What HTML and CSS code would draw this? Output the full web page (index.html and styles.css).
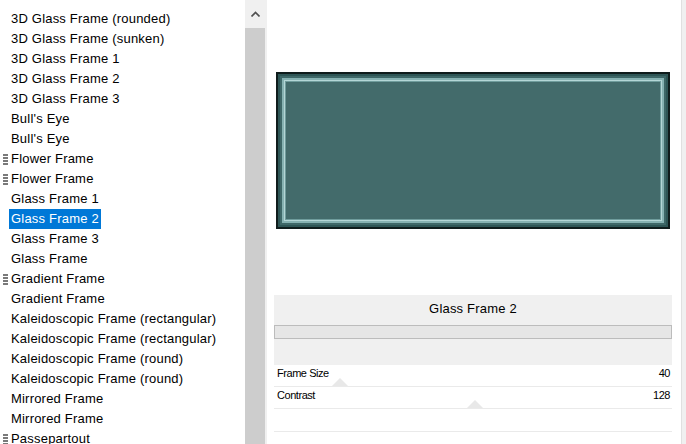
FILE: index.html
```html
<!DOCTYPE html>
<html>
<head>
<meta charset="utf-8">
<link rel="stylesheet" href="styles.css">
</head>
<body>
<div class="app">
  <div class="listpane">
    <ul class="list">
      <li><span class="lbl">3D Glass Frame (rounded)</span></li>
      <li><span class="lbl">3D Glass Frame (sunken)</span></li>
      <li><span class="lbl">3D Glass Frame 1</span></li>
      <li><span class="lbl">3D Glass Frame 2</span></li>
      <li><span class="lbl">3D Glass Frame 3</span></li>
      <li><span class="lbl">Bull's Eye</span></li>
      <li><span class="lbl">Bull's Eye</span></li>
      <li class="grip"><span class="lbl">Flower Frame</span></li>
      <li class="grip"><span class="lbl">Flower Frame</span></li>
      <li><span class="lbl">Glass Frame 1</span></li>
      <li class="sel"><span class="lbl">Glass Frame 2</span></li>
      <li><span class="lbl">Glass Frame 3</span></li>
      <li><span class="lbl">Glass Frame</span></li>
      <li class="grip"><span class="lbl">Gradient Frame</span></li>
      <li><span class="lbl">Gradient Frame</span></li>
      <li><span class="lbl">Kaleidoscopic Frame (rectangular)</span></li>
      <li><span class="lbl">Kaleidoscopic Frame (rectangular)</span></li>
      <li><span class="lbl">Kaleidoscopic Frame (round)</span></li>
      <li><span class="lbl">Kaleidoscopic Frame (round)</span></li>
      <li><span class="lbl">Mirrored Frame</span></li>
      <li><span class="lbl">Mirrored Frame</span></li>
      <li class="grip"><span class="lbl">Passepartout</span></li>
    </ul>
    <div class="scrollbar">
      <div class="sb-up">
        <svg width="9" height="6" viewBox="0 0 9 6"><path d="M0.5 5.5 L4.5 1.5 L8.5 5.5" fill="none" stroke="#505050" stroke-width="1.6"/></svg>
      </div>
      <div class="sb-thumb"></div>
    </div>
  </div>
  <div class="divider"></div>
  <div class="main">
    <div class="preview">
      <div class="frame"><div class="f2"><div class="f3"><div class="f4"><div class="f5"><div class="fill"></div></div></div></div></div></div>
    </div>
    <div class="props">
      <div class="title">Glass Frame 2</div>
      <div class="progress"></div>
      <div class="ticks"></div>
      <div class="row">
        <span class="name">Frame Size</span><span class="val">40</span>
        <span class="thumb" style="left: 58px"></span>
      </div>
      <div class="row">
        <span class="name">Contrast</span><span class="val">128</span>
        <span class="thumb" style="left: 193px"></span>
      </div>
      <div class="row empty"></div>
    </div>
  </div>
  <div class="rightstrip"></div>
</div>
</body>
</html>
```

FILE: styles.css
```css
html, body {
  margin: 0;
  padding: 0;
  background: #ffffff;
  width: 686px;
  height: 444px;
  overflow: hidden;
}
body {
  font-family: "Liberation Sans", Arial, sans-serif;
  font-size: 13px;
  color: #000;
}
.app {
  display: flex;
  width: 686px;
  height: 444px;
}
.listpane {
  display: flex;
  width: 265px;
  flex: none;
}
.list {
  list-style: none;
  margin: 0;
  padding: 9px 0 0 0;
  width: 245px;
  flex: none;
}
.list li {
  height: 20px;
  line-height: 20px;
  padding-left: 9px;
  position: relative;
  white-space: nowrap;
}
.lbl {
  display: inline-block;
  padding: 0 2px;
  line-height: 20px;
  letter-spacing: 0.2px;
}
.sel .lbl {
  background: #0078d7;
  color: #fff;
}
.grip::before {
  content: "";
  position: absolute;
  left: 3px;
  top: 5px;
  width: 5px;
  height: 11px;
  background: repeating-linear-gradient(to bottom, #7a7a7a 0 2px, transparent 2px 3px);
}
.scrollbar {
  width: 20px;
  flex: none;
  display: flex;
  flex-direction: column;
  background: #cdcdcd;
}
.sb-up {
  height: 28px;
  background: #f0f0f0;
  display: flex;
  align-items: center;
  justify-content: center;
}
.sb-thumb {
  flex: 1;
  background: #cdcdcd;
}
.divider {
  width: 5px;
  flex: none;
  border-left: 2px solid #f0f0f0;
  box-sizing: border-box;
}
.main {
  width: 409px;
  flex: none;
  padding-left: 4px;
  box-sizing: border-box;
}
.preview {
  height: 295px;
  padding-top: 72px;
  padding-left: 2px;
  box-sizing: border-box;
}
.frame {
  width: 394px;
  height: 157px;
  box-sizing: border-box;
  border: 2px solid #0f1c1c;
  background: #2e5656;
  padding: 2px;
}
.f2 { height: 100%; box-sizing: border-box; border: 2px solid #3e6868; }
.f3 { height: 100%; box-sizing: border-box; border: 2px solid #86b2b2; }
.f4 { height: 100%; box-sizing: border-box; border: 1px solid #b4d6d6; }
.f5 { height: 100%; box-sizing: border-box; border: 1px solid #6f9c9c; }
.fill { height: 100%; background: #436b6b; }
.props {
  width: 398px;
}
.title {
  background: #f0f0f0;
  height: 30px;
  line-height: 28px;
  text-align: center;
  font-size: 13px;
  letter-spacing: 0.2px;
}
.progress {
  height: 14px;
  box-sizing: border-box;
  border: 1px solid #bcbcbc;
  background: #e6e6e6;
}
.ticks {
  height: 26px;
  background: #f0f0f0;
}
.row {
  position: relative;
  height: 22px;
  display: flex;
  justify-content: space-between;
  align-items: flex-start;
  border-bottom: 1px solid #eaeaea;
  box-sizing: border-box;
  font-size: 11px;
  padding: 2px 2px 0 3px;
  line-height: 12px;
  letter-spacing: -0.45px;
}
.row.empty {
  height: 23px;
}
.thumb {
  position: absolute;
  bottom: 0;
  width: 0;
  height: 0;
  border-left: 8px solid transparent;
  border-right: 8px solid transparent;
  border-bottom: 8px solid #e8e8e8;
}
.rightstrip {
  flex: 1;
  background: #f0f0f0;
  border-left: 1px solid #e0e0e0;
  margin-left: 2px;
}
```
